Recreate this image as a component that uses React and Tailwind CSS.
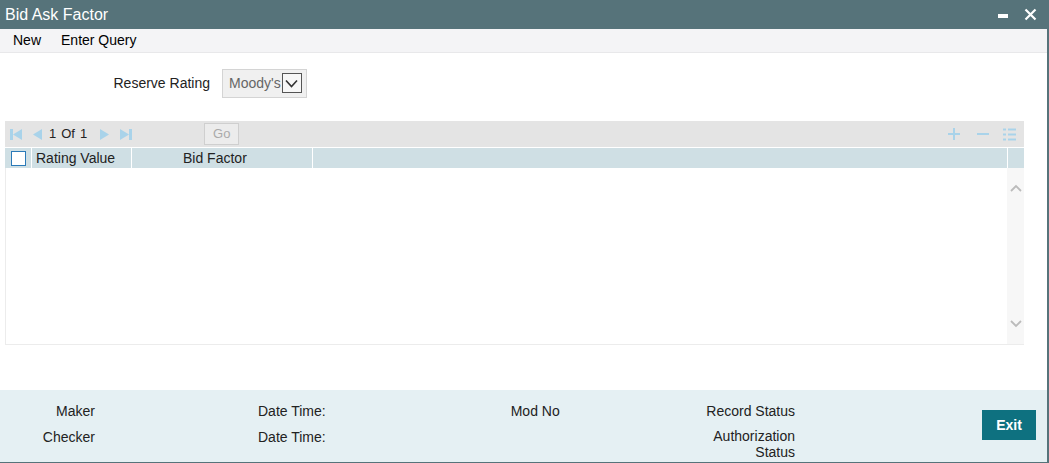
import React from "react";

const Pager = () => (
  <div className="flex items-center h-[26px] bg-[#e4e4e4] pl-[5px] pr-[8px]">
    <svg width="12" height="13" viewBox="0 0 12 13" className="mr-[10px]">
      <rect x="0" y="1" width="3" height="11" fill="#a9d3ea" />
      <path d="M12 1 L3 6.5 L12 12 Z" fill="#a9d3ea" />
    </svg>
    <svg width="10" height="13" viewBox="0 0 10 13" className="mr-[7px]">
      <path d="M10 1 L1 6.5 L10 12 Z" fill="#a9d3ea" />
    </svg>
    <span className="text-[13px] text-[#222]">1</span>
    <span className="text-[13px] text-[#222] ml-[5px]">Of</span>
    <span className="text-[13px] text-[#222] ml-[5px]">1</span>
    <svg width="10" height="13" viewBox="0 0 10 13" className="ml-[13px]">
      <path d="M0 1 L9 6.5 L0 12 Z" fill="#a9d3ea" />
    </svg>
    <svg width="12" height="13" viewBox="0 0 12 13" className="ml-[10px]">
      <path d="M0 1 L9 6.5 L0 12 Z" fill="#a9d3ea" />
      <rect x="9" y="1" width="3" height="11" fill="#a9d3ea" />
    </svg>
    <button className="ml-[72px] h-[22px] w-[35px] border border-[#cfcfcf] bg-[#ececec] text-[13px] text-[#aaa]">
      Go
    </button>
    <div className="flex-1" />
    <svg width="12" height="12" viewBox="0 0 12 12" className="mr-[17px]">
      <path d="M6 0 V12 M0 6 H12" stroke="#a9d3ea" strokeWidth="2" />
    </svg>
    <svg width="12" height="12" viewBox="0 0 12 12" className="mr-[14px]">
      <path d="M0 6 H12" stroke="#a9d3ea" strokeWidth="2" />
    </svg>
    <svg width="13" height="13" viewBox="0 0 13 13">
      <g fill="#a9d3ea">
        <rect x="0" y="0.5" width="3" height="2" />
        <rect x="5" y="0.5" width="8" height="2" />
        <rect x="0" y="5.5" width="3" height="2" />
        <rect x="5" y="5.5" width="8" height="2" />
        <rect x="0" y="10.5" width="3" height="2" />
        <rect x="5" y="10.5" width="8" height="2" />
      </g>
    </svg>
  </div>
);

export default function App() {
  return (
    <div
      className="w-[1049px] h-[463px] flex flex-col bg-white border-r-2 border-b border-[#56737a] overflow-hidden"
      style={{ fontFamily: '"Liberation Sans", Arial, sans-serif' }}
    >
      <div className="h-[29px] bg-[#56737a] flex items-center justify-between pl-[5px] pr-[10px] shrink-0">
        <span className="text-white text-[16px]">Bid Ask Factor</span>
        <div className="flex items-center gap-[16px]">
          <span className="block w-[10px] h-[4px] bg-white mt-[2px]" />
          <svg width="13" height="13" viewBox="0 0 13 13">
            <path d="M1.5 1.5 L11.5 11.5 M11.5 1.5 L1.5 11.5" stroke="white" strokeWidth="2.2" />
          </svg>
        </div>
      </div>

      <div className="h-[24px] bg-[#f4f4f6] flex items-center pl-[13px] text-[14px] text-black border-b border-[#e8e8ea] shrink-0">
        <span>New</span>
        <span className="ml-[20px]">Enter Query</span>
      </div>

      <div className="flex items-center h-[30px] mt-[15px] shrink-0">
        <span className="w-[210px] text-right text-[14px] text-[#222]">Reserve Rating</span>
        <div className="ml-[12px] h-[29px] w-[85px] flex items-center bg-[#f0f0f0] border border-[#d4d4d4] pl-[6px]">
          <span className="text-[14px] text-[#666]">Moody's</span>
          <span className="ml-[1px] w-[20px] h-[20px] border border-[#555] bg-[#f7f7f7] flex items-center justify-center">
            <svg width="13" height="9" viewBox="0 0 13 9">
              <path d="M1 1.5 L6.5 7.5 L12 1.5" stroke="#333" strokeWidth="1.6" fill="none" />
            </svg>
          </span>
        </div>
      </div>

      <div className="mt-[23px] ml-[5px] w-[1019px] flex flex-col shrink-0">
        <Pager />
        <div className="flex h-[21px] bg-[#cfdfe4] border-t border-white text-[14px] text-[#222]">
          <div className="w-[27px] flex items-center justify-center border-r border-white">
            <span className="block w-[15px] h-[15px] border border-[#2a7ab8] bg-white" />
          </div>
          <div className="w-[100px] flex items-center pl-[4px] border-r border-white">Rating Value</div>
          <div className="w-[181px] flex items-center pl-[51px] border-r border-white">Bid Factor</div>
          <div className="flex-1 border-r border-white" />
          <div className="w-[16px]" />
        </div>
        <div className="flex h-[177px] border-l border-b border-[#ececec]">
          <div className="flex-1" />
          <div className="w-[17px] bg-[#f7f7f7] flex flex-col items-center justify-between pt-[16px] pb-[16px]">
            <svg width="12" height="8" viewBox="0 0 12 8">
              <path d="M1 7 L6 2 L11 7" stroke="#bbb" strokeWidth="1.8" fill="none" />
            </svg>
            <svg width="12" height="8" viewBox="0 0 12 8">
              <path d="M1 1 L6 6 L11 1" stroke="#bbb" strokeWidth="1.8" fill="none" />
            </svg>
          </div>
        </div>
      </div>

      <div className="flex-1" />

      <div className="h-[72px] bg-[#e5f0f3] flex shrink-0 text-[14px] text-[#222] relative">
        <div className="w-[95px] flex flex-col items-end pt-[11px]">
          <span className="h-[26px]">Maker</span>
          <span>Checker</span>
        </div>
        <div className="ml-[163px] flex flex-col pt-[11px]">
          <span className="h-[26px]">Date Time:</span>
          <span>Date Time:</span>
        </div>
        <div className="ml-[185px] flex flex-col pt-[11px]">
          <span className="h-[26px]">Mod No</span>
        </div>
        <div className="absolute left-[600px] w-[195px] flex flex-col items-end top-[11px] text-right">
          <span className="h-[26px]">Record Status</span>
          <span className="leading-[16px] mt-[1px]">Authorization<br />Status</span>
        </div>
        <div className="absolute right-[11px] top-[20px]">
          <button className="w-[54px] h-[30px] bg-[#0e7180] text-white font-bold text-[14px]">Exit</button>
        </div>
      </div>
    </div>
  );
}
